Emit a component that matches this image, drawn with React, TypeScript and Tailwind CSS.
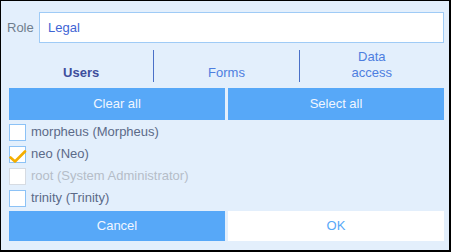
import React, { useState } from "react";

type User = {
  id: string;
  label: string;
  checked: boolean;
  disabled?: boolean;
};

const initialUsers: User[] = [
  { id: "morpheus", label: "morpheus (Morpheus)", checked: false },
  { id: "neo", label: "neo (Neo)", checked: true },
  { id: "root", label: "root (System Administrator)", checked: false, disabled: true },
  { id: "trinity", label: "trinity (Trinity)", checked: false },
];

const CheckMark = () => (
  <svg
    className="absolute left-[-1px] top-[3px]"
    width="18"
    height="14"
    viewBox="0 0 18 14"
    fill="none">
    <path
      d="M1.5 7.5 L6 11.5 L16 1.5"
      stroke="#f4ae00"
      strokeWidth="2.6"
      strokeLinecap="round"
      strokeLinejoin="round"
    />
  </svg>
);

const App = () => {
  const [users, setUsers] = useState(initialUsers);
  const [tab, setTab] = useState("users");

  const toggle = (id: string) =>
    setUsers((u) =>
      u.map((x) => (x.id === id && !x.disabled ? { ...x, checked: !x.checked } : x))
    );

  const tabs = [
    { id: "users", label: "Users" },
    { id: "forms", label: "Forms" },
    { id: "data", label: "Data access" },
  ];

  return (
    <div
      className="w-[451px] h-[252px] bg-[#e3effc] border-black border-t border-l border-r-2 border-b-2 pl-2 pr-[5px] text-[13px] leading-4"
      style={{ fontFamily: '"Liberation Sans", Arial, sans-serif' }}>
      <div className="flex items-center h-[31px] mt-[11px]">
        <span className="w-[32px] -ml-[2px] text-[#6f7d8c]">Role</span>
        <div className="flex-1 h-[31px] bg-white border border-[#9fcbf6] flex items-center pl-2 text-[#3f64d4]">
          Legal
        </div>
      </div>

      <div className="flex h-[32px] mt-[7px]">
        {tabs.map((t, i) => (
          <button
            key={t.id}
            onClick={() => setTab(t.id)}
            className={`flex-1 flex items-end justify-center pb-px text-center ${i > 0 ? "border-l border-[#4a70c8]" : ""} ${tab === t.id ? "font-bold text-[#3e4e9c]" : "text-[#4d7ee0]"}`}>
            {t.id === "data" ? (
              <span className="w-[60px]">{t.label}</span>
            ) : (
              t.label
            )}
          </button>
        ))}
      </div>

      <div className="flex gap-[3px] mt-[6px]">
        <button
          onClick={() => setUsers((u) => u.map((x) => (x.disabled ? x : { ...x, checked: false })))}
          className="flex-1 h-[32px] bg-[#57a8f8] text-[#f1f6ff]">
          Clear all
        </button>
        <button
          onClick={() => setUsers((u) => u.map((x) => (x.disabled ? x : { ...x, checked: true })))}
          className="flex-1 h-[32px] bg-[#57a8f8] text-[#f1f6ff]">
          Select all
        </button>
      </div>

      <div className="flex flex-col mt-[1px]">
        {users.map((u) => (
          <label
            key={u.id}
            onClick={() => toggle(u.id)}
            className={`flex items-center h-[22px] gap-[5px] ${u.disabled ? "text-[#b5bdc8]" : "text-[#5b6a88] cursor-pointer"}`}>
            <span
              className={`relative w-[17px] h-[17px] bg-white border ${u.disabled ? "border-[#d6dbe2]" : "border-[#8cc2f6]"}`}>
              {u.checked && <CheckMark />}
            </span>
            {u.label}
          </label>
        ))}
      </div>

      <div className="flex gap-[3px] mt-[2px]">
        <button className="flex-1 h-[30px] bg-[#57a8f8] text-[#f1f6ff]">Cancel</button>
        <button className="flex-1 h-[30px] bg-white text-[#57a8f8]">OK</button>
      </div>
    </div>
  );
};

export default App;
